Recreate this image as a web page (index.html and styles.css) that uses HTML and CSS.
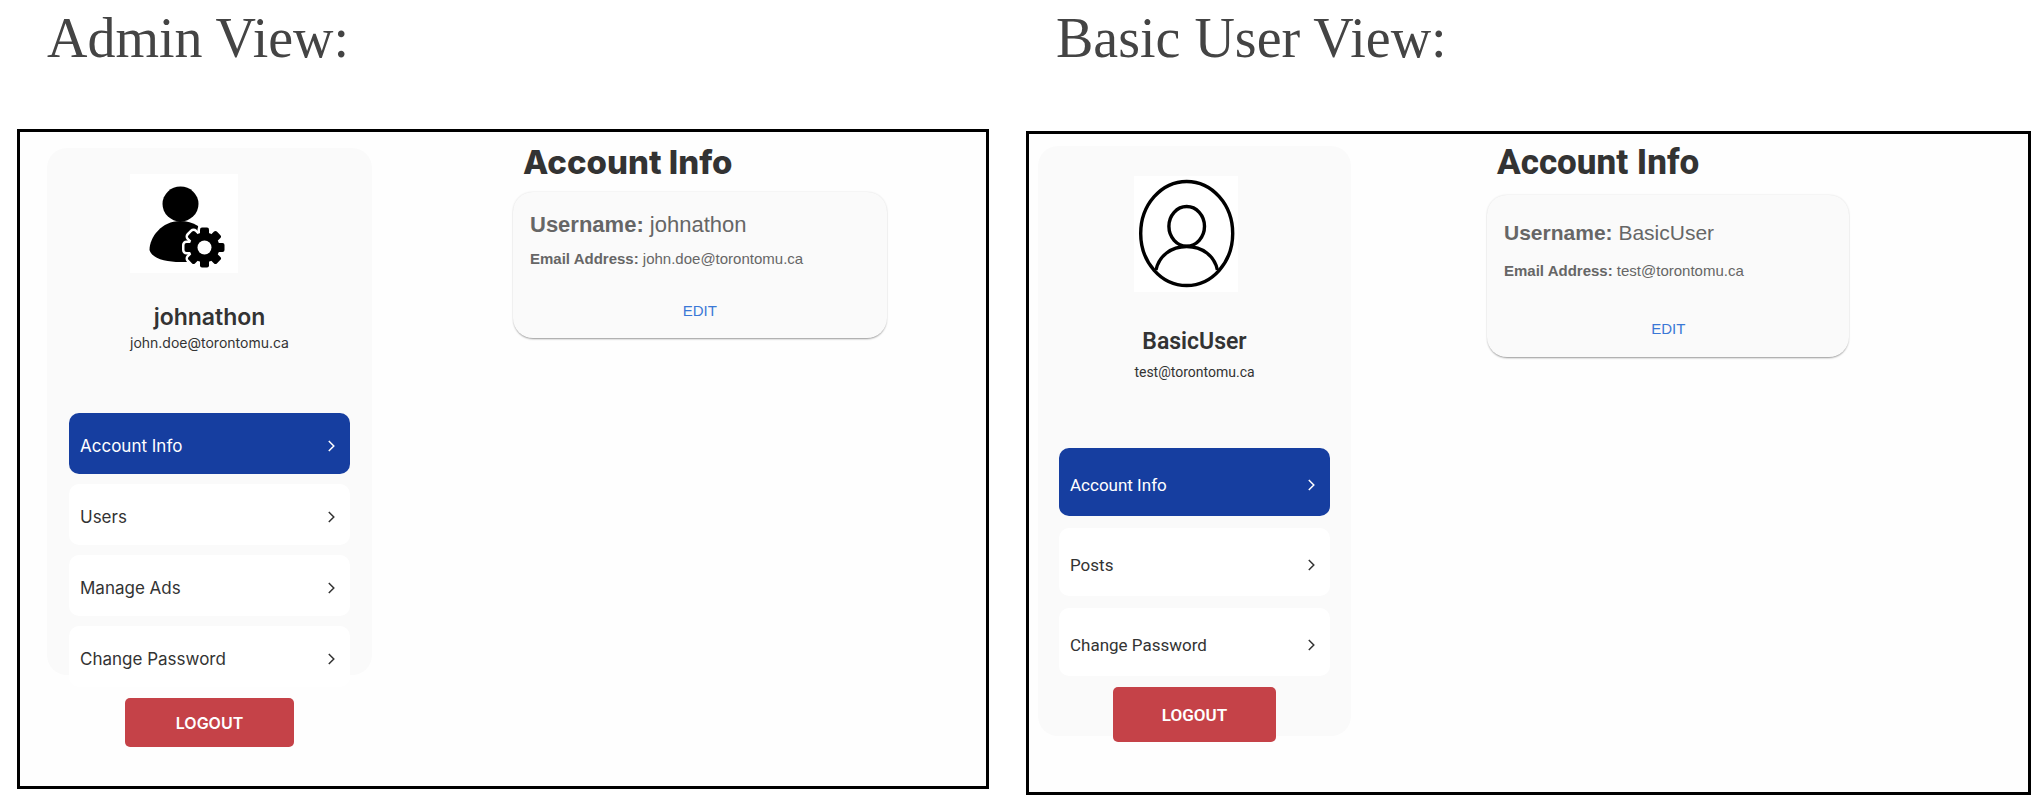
FILE: index.html
```html
<!DOCTYPE html>
<html lang="en">
<head>
<meta charset="utf-8">
<title>Account views</title>
<link rel="stylesheet" href="styles.css">
</head>
<body>
<svg class="sprite" aria-hidden="true">
  <symbol id="chevron" viewBox="0 0 8 12"><path d="M1.300 1 6.300 6l-5 5" fill="none" stroke="currentColor" stroke-width="1.500"/></symbol>
</svg>
<main class="page">
  <section class="view view-admin">
    <h1 class="view-title">Admin View:</h1>
    <div class="frame">
      <aside class="sidebar">
        <div class="profile">
          <svg class="avatar" viewBox="0 0 108 99" role="img" aria-label="Administrator">
            <defs>
              <g id="gear">
                <circle r="15"/>
                <g id="teeth">
                  <rect x="-4.500" y="-20" width="9" height="40" rx="2"/>
                  <rect x="-20" y="-4.500" width="40" height="9" rx="2"/>
                </g>
                <use href="#teeth" transform="rotate(45)"/>
              </g>
            </defs>
            <ellipse cx="50.500" cy="30" rx="18" ry="17.500"/>
            <path d="M50 47C32 47 19.500 63 19.500 76C22 85 37 88 50 88H60L72 74L68 52Q60 47 50 47Z"/>
            <use href="#gear" x="74.500" y="73.500" fill="#fff" stroke="#fff" stroke-width="5"/>
            <use href="#gear" x="74.500" y="73.500"/>
            <circle cx="74.500" cy="73.500" r="7" fill="#fff"/>
          </svg>
          <h2 class="name">johnathon</h2>
          <p class="mail">john.doe@torontomu.ca</p>
        </div>
        <nav class="menu">
          <a class="item active" href="#">Account Info<svg class="chev"><use href="#chevron"/></svg></a>
          <a class="item" href="#">Users<svg class="chev"><use href="#chevron"/></svg></a>
          <a class="item" href="#">Manage Ads<svg class="chev"><use href="#chevron"/></svg></a>
          <a class="item" href="#">Change Password<svg class="chev"><use href="#chevron"/></svg></a>
        </nav>
        <button class="logout" type="button">LOGOUT</button>
      </aside>
      <div class="content">
        <h2 class="heading">Account Info</h2>
        <article class="card">
          <p class="username"><b>Username:</b> johnathon</p>
          <p class="address"><b>Email Address:</b> john.doe@torontomu.ca</p>
          <button class="edit" type="button">EDIT</button>
        </article>
      </div>
    </div>
  </section>
  <section class="view view-basic">
    <h1 class="view-title">Basic User View:</h1>
    <div class="frame">
      <aside class="sidebar">
        <div class="profile">
          <svg class="avatar" viewBox="0 0 104 116" role="img" aria-label="User">
            <g fill="none" stroke="#000" stroke-width="3.400">
              <ellipse cx="52.700" cy="57.500" rx="46" ry="52"/>
              <ellipse cx="52.700" cy="50.300" rx="17.800" ry="19.800"/>
              <path d="M22 94C25 80 37 70.500 52.700 70.500S80.500 80 83.400 94"/>
            </g>
          </svg>
          <h2 class="name">BasicUser</h2>
          <p class="mail">test@torontomu.ca</p>
        </div>
        <nav class="menu">
          <a class="item active" href="#">Account Info<svg class="chev"><use href="#chevron"/></svg></a>
          <a class="item" href="#">Posts<svg class="chev"><use href="#chevron"/></svg></a>
          <a class="item" href="#">Change Password<svg class="chev"><use href="#chevron"/></svg></a>
        </nav>
        <button class="logout" type="button">LOGOUT</button>
      </aside>
      <div class="content">
        <h2 class="heading">Account Info</h2>
        <article class="card">
          <p class="username"><b>Username:</b> BasicUser</p>
          <p class="address"><b>Email Address:</b> test@torontomu.ca</p>
          <button class="edit" type="button">EDIT</button>
        </article>
      </div>
    </div>
  </section>
</main>
</body>
</html>
```
FILE: styles.css
```css
* { box-sizing: border-box; }
body { margin: 0; background: #fff; color: #333; }
h1, h2, p { margin: 0; }
button { border: 0; padding: 0; cursor: pointer; }
.sprite { display: none; }

.page {
  display: grid;
  grid-template-columns: 972fr 1005fr;
  gap: 37px;
  align-items: start;
  padding: 0 13px 0 17px;
}
.view-title {
  padding: 6px 0 0 30px;
  font: 400 56px/64px "Liberation Serif", serif;
  color: #444;
}
.frame {
  display: grid;
  border: 3px solid #000;
  background: #fefefe;
}
.sidebar {
  display: flex;
  flex-direction: column;
  align-items: center;
  border-radius: 20px;
  background: #fafafa;
}
.profile { display: flex; flex-direction: column; }
.avatar { display: block; background: #fff; }
.name { font-weight: 600; text-align: center; }
.menu { display: flex; flex-direction: column; align-self: stretch; }
.item {
  display: flex;
  flex: none;
  align-items: center;
  justify-content: space-between;
  padding: 5px 14px 0 11px;
  border-radius: 10px;
  background: #fff;
  color: #333;
  text-decoration: none;
}
.item.active { background: #163ea0; color: #fff; }
.chev { width: 9px; height: 12px; }
.logout {
  flex: none;
  border-radius: 5px;
  background: #c54248;
  color: #fff;
}
.heading { padding-left: 10px; color: #333; }
.card {
  display: flex;
  flex-direction: column;
  border-radius: 20px;
  background: #fafafa;
  box-shadow: 0 2px 2px -1px #999, 0 0 2px #ddd;
  color: #666;
  font-family: "Liberation Sans", sans-serif;
}
.edit {
  align-self: center;
  background: none;
  color: #3a78d6;
  font-family: "Liberation Sans", sans-serif;
}

.view-admin .frame {
  grid-template-columns: 325fr 473fr;
  column-gap: 141px;
  margin-top: 59px;
  padding: 16px 0 111px 27px;
  font-family: Inter, sans-serif;
}
.view-admin .sidebar { height: 527px; padding: 26px 22px 0; }
.view-admin .avatar { width: 108px; height: 99px; }
.view-admin .name { margin-top: 28px; font-size: 23px; line-height: 32px; }
.view-admin .mail { font-size: 14px; line-height: 20px; }
.view-admin .menu { gap: 10px; margin-top: 60px; }
.view-admin .item { height: 61px; font-size: 17px; }
.view-admin .logout { width: 169px; height: 49px; margin-top: 11px; font: 600 16px Inter, sans-serif; }
.view-admin .heading { font-size: 33px; line-height: 28px; font-weight: 800; }
.view-admin .card { width: 79%; height: 146px; margin-top: 16px; padding: 17px 17px 0; }
.view-admin .username { font-size: 22px; line-height: 32px; }
.view-admin .address { font-size: 15px; line-height: 20px; margin-top: 8px; }
.view-admin .edit { margin-top: 32px; font-size: 15px; line-height: 20px; }

.view-basic .frame {
  grid-template-columns: 313fr 541fr;
  column-gap: 136px;
  margin-top: 61px;
  padding: 12px 0 56px 9px;
  font-family: Roboto, sans-serif;
}
.view-basic .sidebar { height: 590px; padding: 30px 21px 0; }
.view-basic .avatar { width: 104px; height: 116px; }
.view-basic .name { margin-top: 34px; font-size: 23px; line-height: 32px; }
.view-basic .mail { font-size: 14px; line-height: 20px; margin-top: 4px; }
.view-basic .menu { gap: 12px; margin-top: 66px; }
.view-basic .item { height: 68px; font-size: 17px; }
.view-basic .logout { width: 163px; height: 55px; margin-top: 11px; font: 600 17px Roboto, sans-serif; }
.view-basic .heading { font-size: 35px; line-height: 34px; font-weight: 800; }
.view-basic .card { width: 67%; height: 162px; margin-top: 15px; padding: 22px 17px 0; }
.view-basic .username { font-size: 21px; line-height: 32px; }
.view-basic .address { font-size: 15px; line-height: 20px; margin-top: 12px; }
.view-basic .edit { margin-top: 38px; font-size: 15px; line-height: 20px; }
```
